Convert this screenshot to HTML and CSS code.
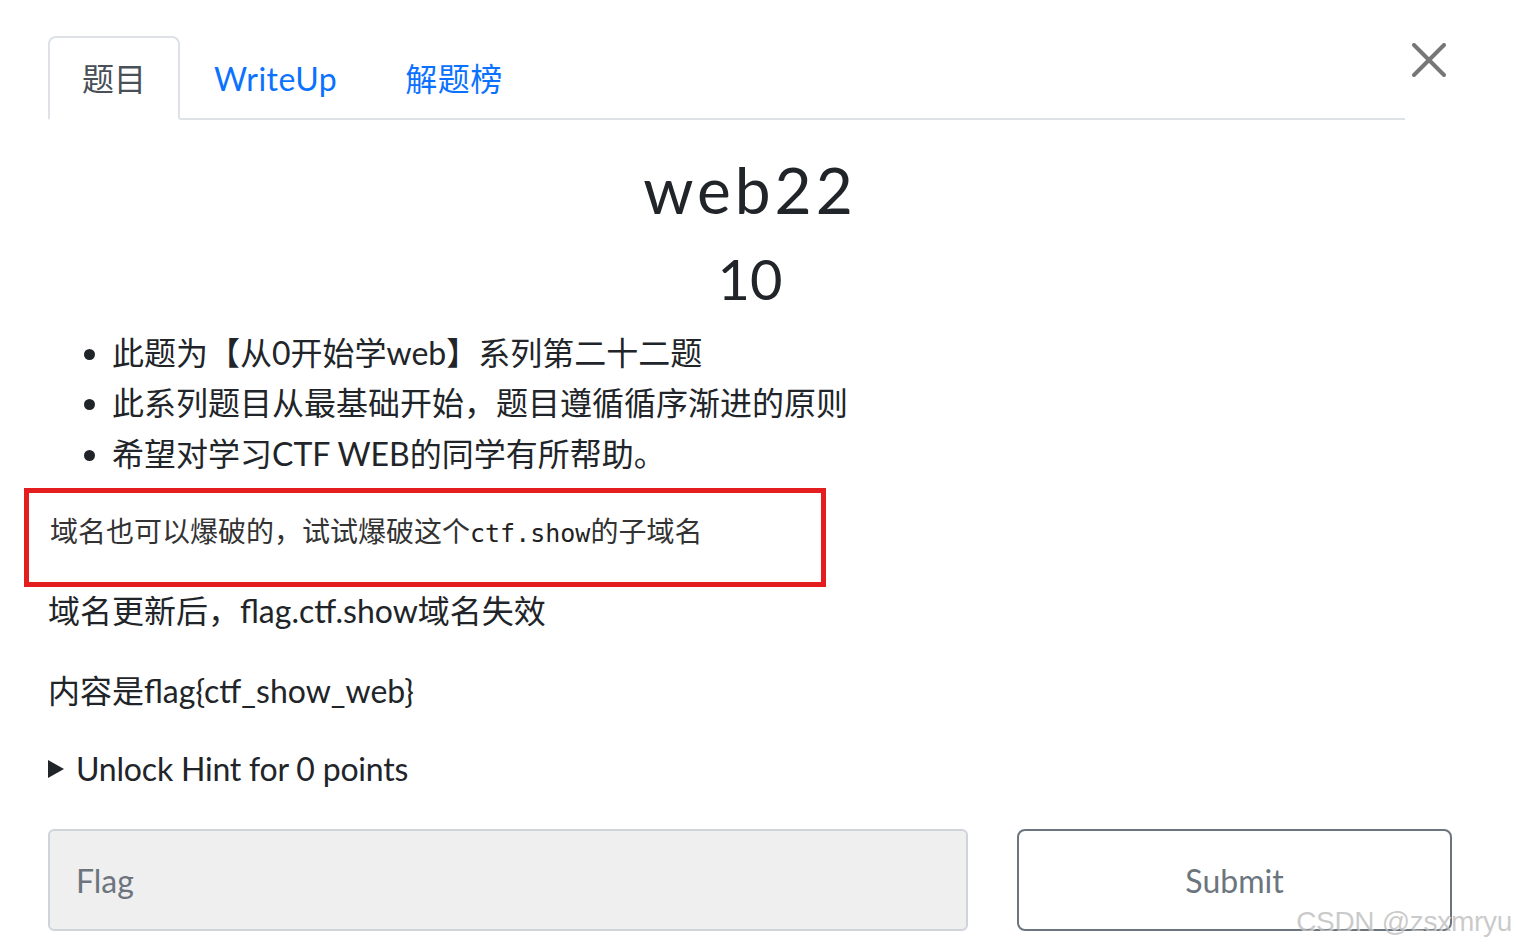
FILE: index.html
```html
<!DOCTYPE html>
<html>
<head>
	<meta charset="utf-8">
	<title>web22</title>
	<link rel="stylesheet" href="styles.css">
</head>
<body>
	<div class="modal">
		<div class="modal-head">
			<ul class="nav-tabs">
				<li class="nav-item"><a class="nav-link active" href="#challenge">题目</a></li>
				<li class="nav-item"><a class="nav-link" href="#writeup">WriteUp</a></li>
				<li class="nav-item"><a class="nav-link" href="#solves">解题榜</a></li>
			</ul>
			<button class="close" type="button" aria-label="Close">
				<svg width="34" height="34" viewBox="0 0 34 34">
					<path d="M2 2 L32 32 M32 2 L2 32" stroke="#777" stroke-width="4" stroke-linecap="round" fill="none"/>
				</svg>
			</button>
		</div>

		<div class="challenge">
			<h2 class="challenge-name">web22</h2>
			<h3 class="challenge-value">10</h3>

			<div class="challenge-desc">
				<ul>
					<li>此题为【从0开始学web】系列第二十二题</li>
					<li>此系列题目从最基础开始，题目遵循循序渐进的原则</li>
					<li>希望对学习CTF WEB的同学有所帮助。</li>
				</ul>
				<!-- 截图上加的红框 -->
				<div class="mark-box">域名也可以爆破的，试试爆破这个<code>ctf.show</code>的子域名</div>
				<p>域名更新后，flag.ctf.show域名失效</p>
				<p>内容是flag{ctf_show_web}</p>
			</div>

			<div class="hint">
				<span class="hint-arrow"></span>
				<span>Unlock Hint for 0 points</span>
			</div>

			<form class="submit-row" onsubmit="return false;">
				<input class="flag-input" type="text" name="answer" placeholder="Flag">
				<button class="btn-submit" type="submit">Submit</button>
			</form>
		</div>

		<div class="watermark">CSDN @zsxmryu</div>
	</div>
</body>
</html>
```

FILE: styles.css
```css
body{
	margin: 0;
	background-color: #fff;
	color: #212529;
	font-family: "Lato", "Noto Sans CJK SC", sans-serif;
	font-size: 32px;
	line-height: 1.5;
}
.modal{
	position: relative;
	width: 1516px;
	height: 948px;
	padding: 36px 64px 0 48px;
	box-sizing: border-box;
	overflow: hidden;
}

/* 顶部标签 */
.modal-head{
	display: flex;
}
.nav-tabs{
	flex: 1;
	display: flex;
	margin: 0;
	padding: 0;
	list-style: none;
	border-bottom: 2px solid #dee2e6;
}
.nav-item{
	margin-bottom: -2px;
}
.nav-link{
	display: block;
	padding: 17px 32px 15px;
	border: 2px solid transparent;
	border-radius: 8px 8px 0 0;
	color: #0b72ff;
	text-decoration: none;
	letter-spacing: 0.5px;
}
.nav-link.active{
	color: #495057;
	background-color: #fff;
	border-color: #dee2e6 #dee2e6 #fff;
	letter-spacing: 0;
}
.close{
	width: 47px;
	height: 48px;
	padding: 7px 0 0;
	border: 0;
	background: none;
	align-self: flex-start;
	display: flex;
	justify-content: center;
	align-items: flex-start;
}

/* 题目 */
.challenge-name{
	margin: 0 0 16px;
	padding-top: 32px;
	font-size: 64px;
	font-weight: 400;
	line-height: 1.2;
	letter-spacing: 4px;
	text-align: center;
}
.challenge-value{
	margin: 0 0 16px;
	font-size: 56px;
	font-weight: 400;
	line-height: 1.2;
	text-align: center;
}
.challenge-desc ul{
	margin: 0;
	padding: 0 0 0 64px;
	line-height: 50.5px;
}
.challenge-desc p{
	margin: 0 0 32px;
	line-height: 48px;
}
.mark-box{
	display: flex;
	align-items: center;
	width: 802px;
	height: 99px;
	margin: 9px 0 0 -24px;
	padding: 0 0 9px 21px;
	box-sizing: border-box;
	border: 5px solid #e41d1f;
	font-family: "Liberation Serif", "Noto Sans CJK SC", serif;
	font-size: 28px;
	color: #333;
}
.mark-box code{
	font-family: "DejaVu Sans Mono", monospace;
	font-size: 25px;
	color: #222;
}

.hint{
	display: flex;
	align-items: center;
	gap: 12px;
	height: 48px;
	margin: -2px 0 36px;
	letter-spacing: -0.2px;
}
.hint-arrow{
	width: 0;
	height: 0;
	border-left: 16px solid #212529;
	border-top: 9px solid transparent;
	border-bottom: 9px solid transparent;
}

/* 提交 */
.submit-row{
	display: grid;
	grid-template-columns: 920px 1fr;
	gap: 49px;
}
.flag-input{
	height: 102px;
	padding: 0 26px;
	box-sizing: border-box;
	border: 2px solid #ced4da;
	border-radius: 6px;
	background-color: #efefef;
	font-family: "Lato", sans-serif;
	font-size: 32px;
	color: #495057;
}
.flag-input::placeholder{
	color: #6c757d;
}
.btn-submit{
	height: 102px;
	border: 2px solid #6c757d;
	border-radius: 8px;
	background-color: #fff;
	font-family: "Lato", sans-serif;
	font-size: 32px;
	color: #6c757d;
}

.watermark{
	position: absolute;
	right: 4px;
	top: 908px;
	font-family: "Liberation Sans", sans-serif;
	font-size: 28px;
	line-height: 28px;
	letter-spacing: -0.3px;
	color: rgba(150, 150, 150, 0.5);
	text-shadow: 1px 1px 0 rgba(255, 255, 255, 0.6);
}
```
